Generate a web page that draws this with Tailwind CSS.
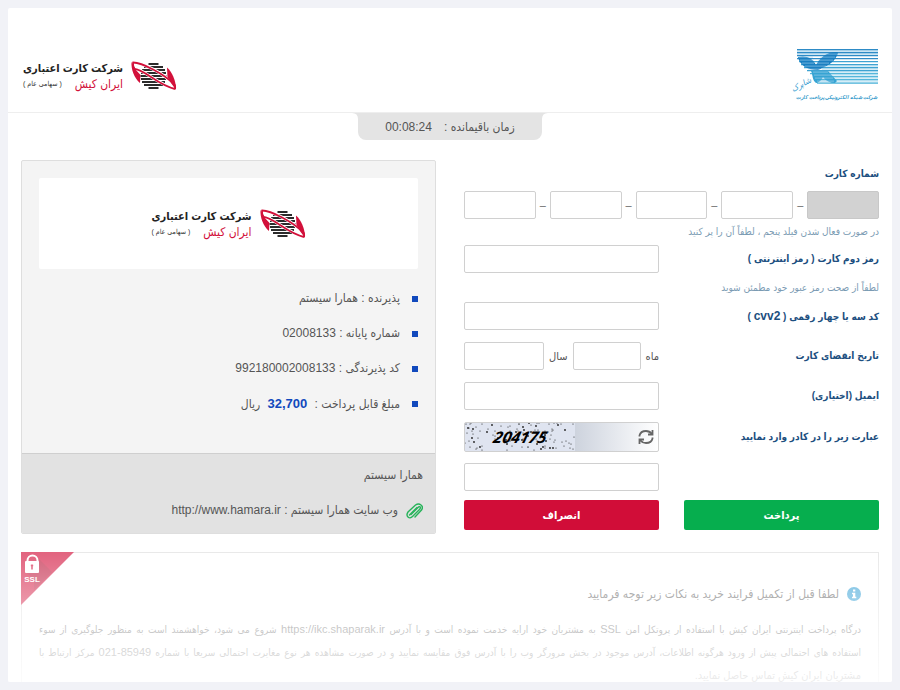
<!DOCTYPE html>
<html lang="fa" dir="rtl">
<head>
    <meta charset="UTF-8">
    <meta name="viewport" content="width=device-width, initial-scale=1.0">
    <title>پرداخت اینترنتی ایران کیش</title>
    <script src="https://cdn.jsdelivr.net/npm/@tailwindcss/browser@4"></script>
</head>
<body class="bg-[#f1f2f7] p-2 font-['Liberation_Sans','DejaVu_Sans_Condensed','DejaVu_Sans',sans-serif] text-xs text-[#555]">
    <!-- Shared shapes -->
    <svg class="hidden">
        <symbol id="kish" viewBox="0 0 46 30">
            <path fill="none" stroke="#2b2b2b" stroke-width="1.900" d="M17.500 3h10M13 6h19M11 9h23M10 12h25M9.500 15h26M10 18h25M11 21h23M13 24h19M17.500 27h10"/>
            <g fill="none" stroke="#fff" stroke-width="3">
                <path d="M2 1.500C12 2 33 12 43 24"/>
                <path d="M3 7C12 8 28 24 43 27"/>
            </g>
            <g fill="none" stroke="#d2103a" stroke-width="1.800">
                <path d="M1.500 1.500C10 1 34 13 43.500 24"/>
                <path d="M2.500 8C12 7 26 24 44 28"/>
                <path d="M2 1.500Q1.500 5 4 9M44 28Q45 24 41 20"/>
            </g>
            <g fill="#d2103a">
                <path d="M.5 1L5 9L9.500 14L9 22C3 17 0 8 .5 1Z"/>
                <path d="M36 6.500C41 11 45 19 45 29L40 22L36.500 16Z"/>
            </g>
        </symbol>
    </svg>

    <div class="relative overflow-hidden rounded-xs bg-white h-[calc(100vh-16px)]">
        <!-- Header -->
        <header class="flex h-[105px] items-start justify-between border-b border-[#eee] pt-10 ps-[13px] pe-[15px]">
            <svg class="h-14 w-[90px] overflow-visible" viewBox="0 0 90 56" role="img" aria-label="شاپرک">
                <path fill="#b4d8ee" opacity=".7" d="M8 1h81v6H8z"/>
                <path fill="#c3e6f3" opacity=".7" d="M34 16h55v20H30z"/>
                <g stroke="#2e8bc6" stroke-width="1.100">
                    <path d="M8 1.600h81M8 4.600h81M8 7.600h81M8 10.600h81"/>
                    <path stroke="#3fa3d2" d="M10 13.600h79M12 16.600h77M15 19.600h74M18 22.600h71"/>
                    <path stroke="#55b6da" d="M21 25.600h68M24 28.600h65M26 31.600h63M28 35.100h61"/>
                </g>
                <path fill="#1a7fc1" d="M9 9C17 7 24 10 27 17C31 9 39 3 49 4C48 10 43 16 35 19L29 22C19 22 11 18 9 9Z"/>
                <path fill="#36a4d3" d="M22 23H39L48 33L46 35C41 35 37 33 34 29C32 33 29 35 27 35C23 32 24 27 22 23Z"/>
                <path stroke="#a9d4ec" stroke-width=".6" d="M36 6.100h12M10 9.100h14M31 9.100h15M11 12.100h14M29 12.100h15M13 15.100h12M28 15.100h12M16 18.100h21M19 21.100h12M24 24.100h15M25 27.100h18M26 30.100h18M28 33.100h17"/>
                <text x="12" y="39" text-anchor="middle" transform="rotate(-28 12 36)" class="fill-[#3ca2d2] text-[8px] italic">شاپرک</text>
                <text x="88" y="51" class="fill-[#2a96c9] text-[5px] font-bold italic">شرکت شبکه الکترونیکی پرداخت کارت</text>
            </svg>
            <div class="flex items-center gap-2 pt-3">
                <svg class="h-[30px] w-[46px]"><use href="#kish"/></svg>
                <div class="text-right leading-4">
                    <p class="text-[11px] font-bold text-[#222]">شرکت کارت اعتباری</p>
                    <p class="flex items-center justify-between text-xs text-[#d2103a]">ایران کیش <span class="text-[7px] text-[#333]">( سهامی عام )</span></p>
                </div>
            </div>
        </header>

        <!-- Remaining time -->
        <div class="relative mx-auto flex h-[27px] w-46 items-center justify-center gap-3 rounded-b-lg bg-[#e4e4e4] text-xs">
            <svg class="absolute -right-1.5 top-0 size-1.5" viewBox="0 0 6 6"><path d="M0 6V0H6Q0 0 0 6Z" fill="#e4e4e4"/></svg>
            <svg class="absolute -left-1.5 top-0 size-1.5" viewBox="0 0 6 6"><path d="M6 6V0H0Q6 0 6 6Z" fill="#e4e4e4"/></svg>
            <span>زمان باقیمانده :</span>
            <bdi dir="ltr">00:08:24</bdi>
        </div>

        <main class="grid grid-cols-2 gap-7 px-[13px] pt-5">
            <!-- Card form -->
            <form class="text-[11px]">
                <label for="card1" class="flex h-[31px] items-center pb-1 text-[10px] font-bold text-[#1d4f80]">شماره کارت</label>
                <div class="flex items-center text-[#666]">
                    <input id="card1" disabled class="h-7 min-w-0 flex-1 rounded-xs border border-[#c8c8c8] bg-[#d2d2d2]">
                    <span class="w-3.5 text-center">–</span>
                    <input aria-label="بخش چهارم" class="h-7 min-w-0 flex-1 rounded-xs border border-[#d0d0d0]">
                    <span class="w-3.5 text-center">–</span>
                    <input aria-label="بخش سوم" class="h-7 min-w-0 flex-1 rounded-xs border border-[#d0d0d0]">
                    <span class="w-3.5 text-center">–</span>
                    <input aria-label="بخش دوم" class="h-7 min-w-0 flex-1 rounded-xs border border-[#d0d0d0]">
                    <span class="w-3.5 text-center">–</span>
                    <input aria-label="بخش اول" class="h-7 min-w-0 flex-1 rounded-xs border border-[#d0d0d0]">
                </div>
                <p class="flex h-[26px] items-center text-[10px] text-[#7b9bb3]">در صورت فعال شدن فیلد پنجم ، لطفاً آن را پر کنید</p>
                <div class="grid grid-cols-2 items-center gap-x-[25px]">
                    <label for="pin2" class="whitespace-nowrap text-[10px] font-bold text-[#1d4f80]">رمز دوم کارت ( رمز اینترنتی )</label>
                    <input id="pin2" type="password" class="h-7 w-full rounded-xs border border-[#d0d0d0]">
                </div>
                <p class="flex h-[29px] items-center text-[10px] text-[#7b9bb3]">لطفاً از صحت رمز عبور خود مطمئن شوید</p>
                <div class="grid grid-cols-2 items-center gap-x-[25px] gap-y-3">
                    <label for="cvv" class="whitespace-nowrap text-[10px] font-bold text-[#1d4f80]">کد سه یا چهار رقمی ( <span class="text-xs">cvv2</span> )</label>
                    <input id="cvv" type="password" class="h-7 w-full rounded-xs border border-[#d0d0d0]">

                    <label for="month" class="text-[10px] font-bold text-[#1d4f80]">تاریخ انقضای کارت</label>
                    <div class="flex items-center justify-between">
                        <label for="month">ماه</label>
                        <input id="month" class="h-7 w-[68px] rounded-xs border border-[#d0d0d0]">
                        <label for="year">سال</label>
                        <input id="year" class="h-7 w-20 rounded-xs border border-[#d0d0d0]">
                    </div>

                    <label for="email" class="text-[10px] font-bold text-[#1d4f80]">ایمیل (اختیاری)</label>
                    <input id="email" type="email" class="h-7 w-full rounded-xs border border-[#d0d0d0]">

                    <label for="captcha" class="whitespace-nowrap text-[10px] font-bold text-[#1d4f80]">عبارت زیر را در کادر وارد نمایید</label>
                    <div class="flex h-[30px] items-center justify-between overflow-hidden rounded-xs border border-[#d0d0d0] bg-linear-to-r from-[#cbd1dc] from-55% to-white">
                        <button type="button" aria-label="تصویر جدید" class="px-1">
                            <svg class="size-4" viewBox="0 0 16 16" fill="none" stroke="#666" stroke-width="1.800">
                                <path d="M1.500 7.500V6.500Q2.500 2 8 2Q11.500 2 14 5M14.500 8.500V9.500Q13.500 14 8 14Q4.500 14 2 11"/>
                                <path d="M14.500 1V5.500H10M1.500 15V10.500H6"/>
                            </svg>
                        </button>
                        <svg id="noise" class="h-7 w-[110px] bg-[#dfe4f0]" viewBox="0 0 110 28">
                            <text x="54" y="20" direction="ltr" text-anchor="middle" transform="skewX(-14) translate(5 0)" class="fill-black font-['Open_Sans'] text-[16px] font-bold italic">204175</text>
                        </svg>
                    </div>
                </div>
                <div class="mt-[11px] grid grid-cols-2 gap-x-[25px] gap-y-[9px]">
                    <input id="captcha" class="col-start-2 h-7 w-full rounded-xs border border-[#d0d0d0]">
                    <button type="submit" class="h-[30px] rounded-xs bg-[#06ae4e] font-bold text-white">پرداخت</button>
                    <button type="button" class="h-[30px] rounded-xs bg-[#d10d38] font-bold text-white">انصراف</button>
                </div>
            </form>

            <!-- Merchant -->
            <section class="flex h-[374px] flex-col overflow-hidden rounded-xs border border-[#dedede] bg-[#f4f4f4]">
                <div class="mx-[17px] mt-[17px] flex h-[91px] items-center justify-center gap-2 rounded-xs bg-white">
                    <svg class="h-[30px] w-[46px]"><use href="#kish"/></svg>
                    <div class="leading-4">
                        <p class="text-[11px] font-bold text-[#222]">شرکت کارت اعتباری</p>
                        <p class="flex items-center justify-between text-xs text-[#d2103a]">ایران کیش <span class="text-[7px] text-[#333]">( سهامی عام )</span></p>
                    </div>
                </div>
                <ul class="grow px-[17px] pt-3 text-xs leading-[35px]">
                    <li class="flex items-center gap-3"><i class="size-1.5 bg-[#1149bd]"></i>پذیرنده : همارا سیستم</li>
                    <li class="flex items-center gap-3"><i class="size-1.5 bg-[#1149bd]"></i><span>شماره پایانه : 02008133</span></li>
                    <li class="flex items-center gap-3"><i class="size-1.5 bg-[#1149bd]"></i><span>کد پذیرندگی : 992180002008133</span></li>
                    <li class="flex items-center gap-3"><i class="size-1.5 bg-[#1149bd]"></i><span>مبلغ قابل پرداخت : <b class="mx-1 text-[13px] text-[#1149bd]">32,700</b> ریال</span></li>
                </ul>
                <div class="h-20 border-t border-[#cfcfcf] bg-[#e2e2e2] px-3 pt-1 text-xs leading-[35px]">
                    <p>همارا سیستم</p>
                    <p class="flex items-center gap-2">
                        <svg class="h-4 w-[17px]" viewBox="0 0 17 16" fill="none" stroke="#27b35a" stroke-width="1.400" stroke-linecap="round">
                            <path d="M5 11.500L12 4.500Q13.500 3 14.200 4T13.500 6.500L6.500 13.500Q4 16 2 14T2 9L9.500 2Q12.500 0 15 2T15.500 7L9 14"/>
                            <path d="M3.500 12L11 4.500"/>
                        </svg>
                        <span>وب سایت همارا سیستم : <a href="#" dir="ltr"><bdi>http://www.hamara.ir</bdi></a></span>
                    </p>
                </div>
            </section>
        </main>

        <!-- Notes -->
        <section class="relative mx-[13px] mt-[18px] border border-b-0 border-[#ddd] px-[17px] pt-[31px] pb-10 text-[11px]">
            <svg class="absolute -top-px -left-px size-[53px]" viewBox="0 0 53 53">
                <path d="M0 0H53L0 53Z" fill="#d2103a"/>
                <path d="M18 7L31 20L13 38V28L5 20Z" fill="#a50d2e" opacity=".5"/>
                <path d="M6.500 10V8.500a5 5 0 0 1 10 0V10" fill="none" stroke="#fff" stroke-width="2"/>
                <rect x="4" y="9" width="14" height="12" rx="1" fill="#fff"/>
                <path d="M11 12.500v5M9.800 13.500h2.400" stroke="#d2103a" stroke-width="1.600"/>
                <text x="11" y="30" direction="ltr" text-anchor="middle" class="fill-white font-['Liberation_Sans'] text-[8px] font-bold">SSL</text>
            </svg>
            <h2 class="flex items-center gap-2 text-xs leading-5">
                <svg class="size-3.5" viewBox="0 0 14 14"><circle cx="7" cy="7" r="7" fill="#1d95d0"/><path d="M6 2.500h2.300v2H6zM5 5.700h3.300v4H9.300v1.600H5V9.700h1V7.200H5z" fill="#fff"/></svg>
                لطفا قبل از تکمیل فرایند خرید به نکات زیر توجه فرمایید
            </h2>
            <p class="mt-3.5 text-[10px] leading-[22px]">
                <span class="block text-justify [text-align-last:justify]">درگاه پرداخت اینترنتی ایران کیش با استفاده ار پروتکل امن <bdi class="text-[11px]">SSL</bdi> به مشتریان خود ارایه خدمت نموده است و با آدرس <bdi dir="ltr" class="text-[11px]">https://ikc.shaparak.ir</bdi> شروع می شود، خواهشمند است به منظور جلوگیری از سوء</span>
                <span class="block text-justify [text-align-last:justify]">استفاده های احتمالی پیش از ورود هرگونه اطلاعات، آدرس موجود در بخش مرورگر وب را با آدرس فوق مقایسه نمایید و در صورت مشاهده هر نوع مغایرت احتمالی سریعا با شماره <bdi dir="ltr" class="text-[11px]">021-85949</bdi> مرکز ارتباط با</span>
                <span class="block text-[11px]">مشتریان ایران کیش تماس حاصل نمایید.</span>
            </p>
        </section>
        <div class="pointer-events-none absolute inset-x-0 bottom-0 h-[142px] bg-linear-to-b from-white/30 to-white/90"></div>
    </div>

    <script>
        // Speckle the captcha picture
        const noise = document.getElementById('noise');
        let seed = 7;

        function next(max) {
            seed = (seed * 16807) % 2147483647;
            return seed % max;
        }

        for (let i = 0; i < 110; i++) {
            const dot = document.createElementNS('http://www.w3.org/2000/svg', 'circle');
            dot.setAttribute('cx', next(110));
            dot.setAttribute('cy', next(28));
            dot.setAttribute('r', next(4) === 0 ? 0.9 : 0.6);
            dot.setAttribute('fill', '#222');
            noise.prepend(dot);
        }
    </script>
</body>
</html>
